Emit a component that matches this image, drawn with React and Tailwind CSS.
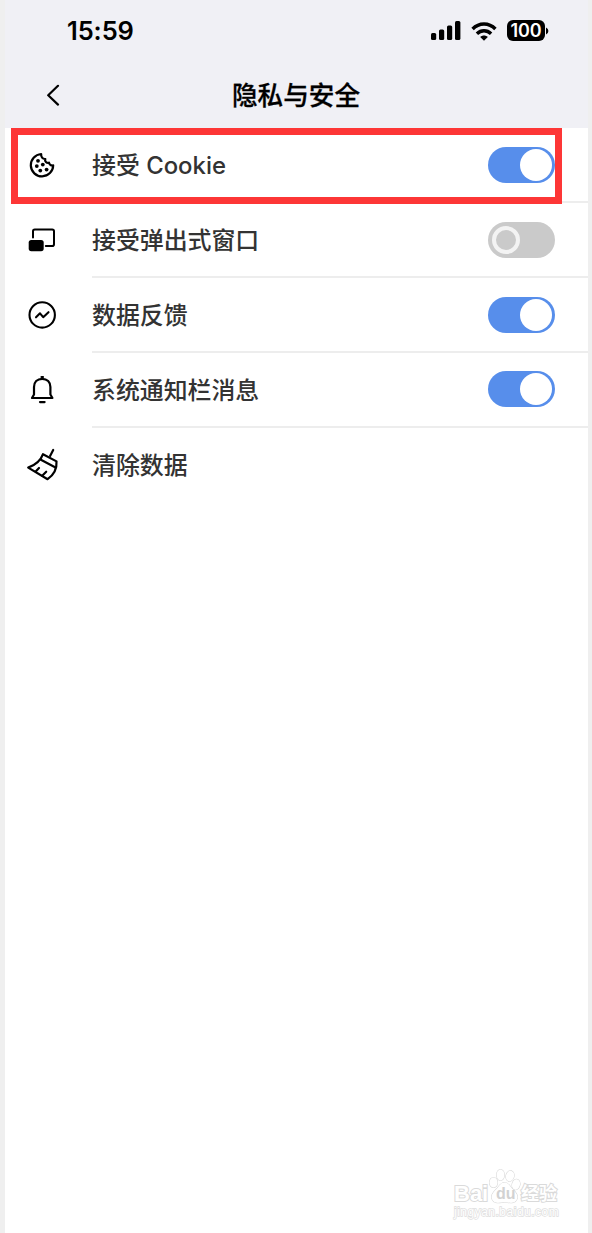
const CookieIcon = () => (
  <svg width="30" height="30" viewBox="0 0 30 30" fill="none" stroke="#000" strokeWidth="2.2" strokeLinejoin="round">
    <path d="M14.2 4 A11.2 11.2 0 1 0 26.2 15.3 C24.4 16 22.3 14.8 22 12.7 C19.5 13.3 17.5 11.2 18.3 9 C15.6 9.2 13.8 6.8 14.2 4 Z" />
    <g fill="#000" stroke="none">
      <circle cx="11" cy="10.8" r="1.9" />
      <circle cx="9.8" cy="16.1" r="1.9" />
      <circle cx="15.8" cy="14.6" r="1.9" />
      <circle cx="13.3" cy="20.6" r="1.9" />
      <circle cx="19.6" cy="19.6" r="1.9" />
    </g>
  </svg>
)

const PopupIcon = () => (
  <svg width="30" height="30" viewBox="0 0 30 30" fill="none" stroke="#000" strokeWidth="2" strokeLinecap="round">
    <path d="M6 12.5 V6.3 Q6 4.5 7.8 4.5 H25.2 Q27 4.5 27 6.3 V19.2 Q27 21 25.2 21 H18.8" />
    <rect x="1.7" y="15" width="15" height="11.2" rx="2.6" fill="#000" stroke="none" />
  </svg>
)

const FeedbackIcon = () => (
  <svg width="30" height="30" viewBox="0 0 30 30" fill="none" stroke="#000" strokeWidth="2.1" strokeLinecap="round" strokeLinejoin="round">
    <circle cx="15.2" cy="14.9" r="12.7" />
    <path d="M9 17.3 L13 13.3 L16.2 17.2 L21.5 12.2" />
  </svg>
)

const BellIcon = () => (
  <svg width="30" height="30" viewBox="0 0 30 30" fill="none" stroke="#000" strokeWidth="2.2" strokeLinecap="round" strokeLinejoin="round">
    <path d="M14.5 2 H16" />
    <path d="M15.2 3.8 C10.2 3.8 7 7.2 7 12 V19.5 L5 23 H25.4 L23.4 19.5 V12 C23.4 7.2 20.2 3.8 15.2 3.8 Z" />
    <path d="M13 27.1 H17.6" />
  </svg>
)

const BroomIcon = () => (
  <svg className="overflow-visible" width="30" height="30" viewBox="0 0 30 30" fill="none" stroke="#000" strokeWidth="2.2" strokeLinecap="round" strokeLinejoin="round">
    <path d="M26.2 0 L23.1 5.9" />
    <path d="M16 4.2 L29.5 11.4 C30 18 27.3 24.5 20.6 29.2 L1.2 17.6 C7.8 15.3 13.5 11.2 16 4.2 Z" />
    <path d="M13.9 9.8 L28.5 17.4" />
    <path d="M12 18 L8.7 21.5 M19.2 21.7 L15.2 25.8" />
  </svg>
)

const settings = [
  { label: '接受 Cookie', icon: <CookieIcon />, enabled: true },
  { label: '接受弹出式窗口', icon: <PopupIcon />, enabled: false },
  { label: '数据反馈', icon: <FeedbackIcon />, enabled: true },
  { label: '系统通知栏消息', icon: <BellIcon />, enabled: true },
  { label: '清除数据', icon: <BroomIcon /> },
]

const Toggle = ({ enabled }) => (
  <button
    role="switch"
    aria-checked={enabled}
    className={`mb-[1.4px] flex h-9 w-[67px] shrink-0 items-center rounded-full ${
      enabled ? 'justify-end bg-[#578eeb] pr-[2.6px]' : 'justify-start bg-[#cacaca] pl-[4px]'
    }`}
  >
    <span
      className={enabled ? 'size-8 rounded-full bg-white' : 'size-[28px] rounded-full border-[4px] border-[#f3f3f3]'}
    />
  </button>
)

const StatusBar = () => (
  <div className="flex h-[62px] items-center justify-between pr-[38px] pl-[62px]">
    <span className="text-[25.5px] leading-none font-semibold tracking-[-0.1px]">15:59</span>
    <div className="flex items-center">
      <svg className="mb-px" width="30" height="19" viewBox="0 0 30 19">
        <rect x="0" y="12" width="5.2" height="7" rx="1.5" />
        <rect x="8" y="8.5" width="5.2" height="10.5" rx="1.5" />
        <rect x="16" y="4.5" width="5.2" height="14.5" rx="1.5" />
        <rect x="24" y="0" width="5.4" height="19" rx="1.5" />
      </svg>
      <svg className="ml-[10px]" width="26" height="19" viewBox="0 0 26 19" fill="none" stroke="#000" strokeWidth="3.4">
        <path d="M1.6 7 C8 0.3 18 0.3 24.4 7" />
        <path d="M5.9 11.8 C10 7.8 16 7.8 20.1 11.8" />
        <path d="M13 18.8 L9.2 15 C11.3 13 14.7 13 16.8 15 Z" fill="#000" stroke="none" />
      </svg>
      <span className="mb-px ml-[10px] flex h-[21px] w-[38px] items-center justify-center rounded-[6px] bg-black text-[18px] font-semibold tracking-[-0.2px] text-white">
        100
      </span>
      <svg className="mr-px ml-px" width="3" height="8" viewBox="0 0 3 8">
        <path d="M0 0.5 Q2.4 1.8 2.4 4 Q2.4 6.2 0 7.5 Z" />
      </svg>
    </div>
  </div>
)

const Watermark = () => (
  <div className="absolute top-[1168px] left-[448px] h-[54px] w-[107px] font-['Liberation_Sans','Noto_Sans_CJK_SC',sans-serif] text-white [paint-order:stroke_fill] [-webkit-text-stroke:2px_#dadada]">
    <svg className="absolute top-0 left-[34px]" width="34" height="36" viewBox="0 0 34 36" fill="white" stroke="#d8d8d8" strokeWidth="1.1">
      <ellipse cx="6.5" cy="14.5" rx="4" ry="5" />
      <ellipse cx="13.5" cy="7" rx="3.9" ry="5.4" />
      <ellipse cx="23" cy="8" rx="4" ry="5.3" transform="rotate(15 23 8)" />
      <ellipse cx="29" cy="16.5" rx="3.9" ry="5.2" transform="rotate(15 29 16.5)" />
      <path d="M17.5 14.5 C21 14.5 22.5 17.5 25 20.5 C28.5 24 31.5 27 30 31 C28 36.5 21.5 34.3 17.5 34.3 C13.5 34.3 7 36.5 5 31 C3.5 27 6.5 24 10 20.5 C12.5 17.5 14 14.5 17.5 14.5 Z" />
    </svg>
    <span className="absolute top-[15px] left-px text-[22px] leading-[22px] font-bold">Bai</span>
    <span className="absolute top-[18px] left-[43px] text-[16px] leading-[16px] font-bold text-[#d2d2d2] [-webkit-text-stroke:0]">du</span>
    <span className="absolute top-[16px] left-[68px] text-[18px] leading-[20px] font-bold whitespace-nowrap">经验</span>
    <span className="absolute top-[38px] left-px text-[12px] leading-[12px] tracking-[0.5px] [-webkit-text-stroke:1.4px_#dedede]">jingyan.baidu.com</span>
  </div>
)

const App = () => {
  return (
    <div className="relative h-[1233px] w-[592px] overflow-hidden border-r-[4px] border-l-[5px] border-[#efefef] bg-white font-[Inter,'Noto_Sans_CJK_SC',sans-serif]">
      <header className="h-32 bg-[#f0f0f5] text-black">
        <StatusBar />
        <div className="grid h-[66px] grid-cols-[96px_1fr_96px] items-center">
          <button aria-label="返回" className="pl-[41px]">
            <svg width="16" height="22" viewBox="0 0 16 22" fill="none" stroke="#000" strokeWidth="2.2" strokeLinecap="round" strokeLinejoin="round">
              <path d="M12 1.8 L2.2 11.3 L12 20.6" />
            </svg>
          </button>
          <h1 className="pt-[2px] pr-px text-center text-[25.6px] leading-none font-medium [-webkit-text-stroke:0.3px_#000]">
            隐私与安全
          </h1>
        </div>
      </header>

      <main>
        {settings.map((item, index) => (
          <div key={item.label} className="flex h-[74.9px]">
            <div className="flex w-[87px] items-center pb-px pl-[22px]">{item.icon}</div>
            <div
              className={`flex flex-1 items-center justify-between pt-[2px] pr-[33px] ${
                index < settings.length - 1 ? 'border-b-2 border-[#ededed]' : 'pb-[2px]'
              }`}
            >
              <span className="pt-[2px] text-[23.9px] leading-none font-[450] text-[#333]">{item.label}</span>
              {item.enabled !== undefined && <Toggle enabled={item.enabled} />}
            </div>
          </div>
        ))}
      </main>

      {/* Highlight frame */}
      <div className="pointer-events-none absolute top-[128px] left-[6px] h-[76px] w-[551px] border-[7px] border-[#fd3636]" />
      <Watermark />
    </div>
  )
}

export default App
